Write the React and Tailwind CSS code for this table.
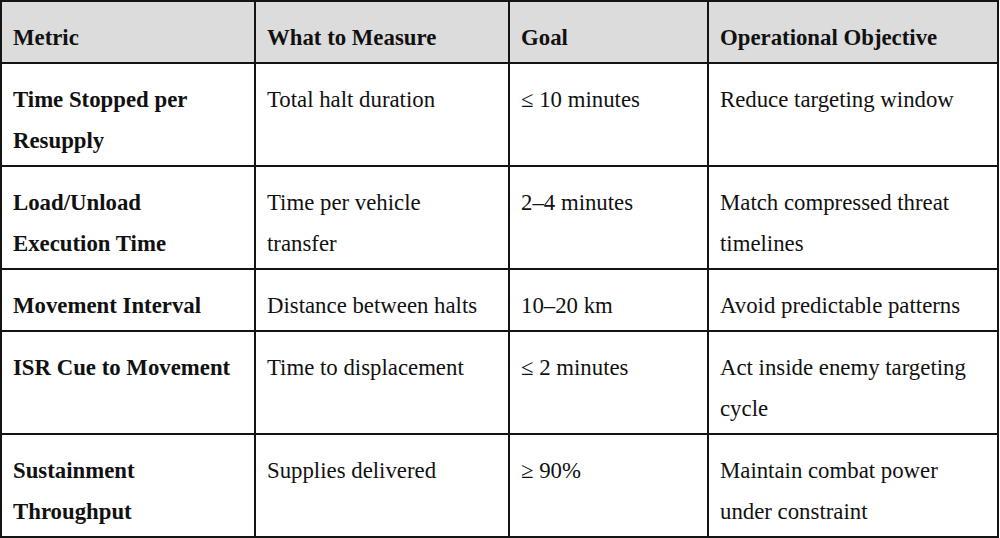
const rows = [
  ["Time Stopped per Resupply", "Total halt duration", "≤ 10 minutes", "Reduce targeting window"],
  ["Load/Unload Execution Time", "Time per vehicle transfer", "2–4 minutes", "Match compressed threat timelines"],
  ["Movement Interval", "Distance between halts", "10–20 km", "Avoid predictable patterns"],
  ["ISR Cue to Movement", "Time to displacement", "≤ 2 minutes", "Act inside enemy targeting cycle"],
  ["Sustainment Throughput", "Supplies delivered", "≥ 90%", "Maintain combat power under constraint"],
];

const headers = ["Metric", "What to Measure", "Goal", "Operational Objective"];

export default function App() {
  return (
    <div className="w-[1000px] h-[538px] bg-white font-['Liberation_Serif',serif] text-[22.8px] leading-[41px] text-[#111]">
      <div className="w-[999px] grid grid-cols-[252px_252px_197px_288px] gap-[2px] p-[2px] bg-[#141414]">
        {headers.map((h) => (
          <div key={h} className="bg-[#dcdcdc] pl-[11px] pr-4 pt-[15px] pb-[4px] font-bold">
            {h}
          </div>
        ))}
        {rows.map((r, i) =>
          r.map((c, j) => (
            <div
              key={i + "-" + j}
              className={
                "bg-white pl-[11px] pr-4 pt-[15px] pb-[4px] " + (j === 0 ? "font-bold" : "")
              }
            >
              {c}
            </div>
          ))
        )}
      </div>
    </div>
  );
}
